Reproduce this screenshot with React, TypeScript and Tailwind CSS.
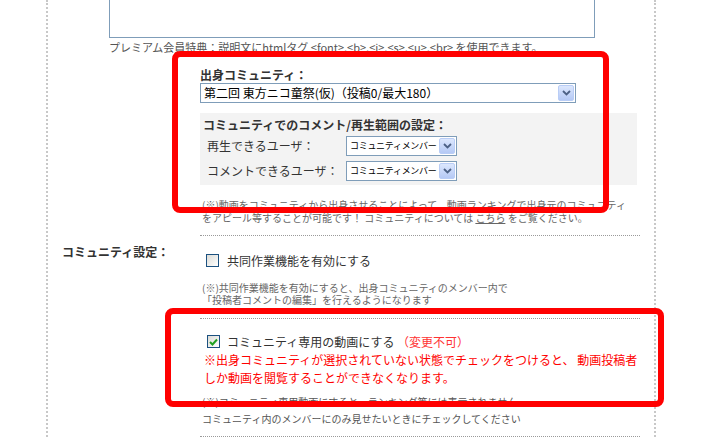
import React from "react";

const font = { fontFamily: '"Noto Sans CJK JP", "Noto Sans", sans-serif' };

function DropButton() {
  return (
    <div className="flex h-[16px] w-[16px] shrink-0 items-center justify-center rounded-[2px] border border-[#b9cdf6] bg-gradient-to-b from-[#dce7fd] to-[#b5c9f5]">
      <svg width="9" height="6" viewBox="0 0 9 6">
        <path d="M1 1 L4.5 4.5 L8 1" fill="none" stroke="#4d6185" strokeWidth="1.8" />
      </svg>
    </div>
  );
}

function Select({ value, className, textClass }: { value: string; className: string; textClass: string }) {
  return (
    <div className={`flex items-center justify-between border border-[#7f9db9] bg-white pl-[3px] pr-[1px] ${className}`}>
      <span className={`whitespace-nowrap text-[#000] ${textClass}`}>{value}</span>
      <DropButton />
    </div>
  );
}

function Checkbox({ checked }: { checked?: boolean }) {
  return (
    <div className="flex h-[13px] w-[13px] shrink-0 items-center justify-center border border-[#1c5180] bg-gradient-to-br from-[#dcdcd7] to-[#ffffff]">
      {checked && (
        <svg width="9" height="8" viewBox="0 0 9 8">
          <path d="M1 4 L3.5 6.5 L8 1.5" fill="none" stroke="#21a121" strokeWidth="2" />
        </svg>
      )}
    </div>
  );
}

function Dotted() {
  return <div className="w-[440px] border-t border-dotted border-[#9a9a9a]" />;
}

export default function App() {
  return (
    <div className="relative h-[437px] w-[716px] overflow-hidden bg-white text-[#333]" style={font}>
      <div className="ml-[46px] h-[437px] w-[610px] border-x-2 border-dotted border-[#c8c8c8]">
        {/* description row */}
        <div className="pl-[61px]">
          <div className="h-[38px] w-[486px] border border-t-0 border-[#7f9db9]" />
          <p className="mt-[3px] text-[11px] leading-[13px] text-[#555]">
            プレミアム会員特典：説明文にhtmlタグ &lt;font&gt;,&lt;b&gt;,&lt;i&gt;,&lt;s&gt;,&lt;u&gt;,&lt;br&gt; を使用できます。
          </p>
        </div>

        {/* community row */}
        <div className="flex">
          <div className="w-[152px] shrink-0" />
          <div className="w-[440px]">
            <p className="mt-[13px] text-[12px] font-bold leading-[15px] text-[#333]">出身コミュニティ：</p>
            <Select
              value="第二回  東方ニコ童祭(仮)（投稿0/最大180）"
              className="mt-[1px] h-[20px] w-[376px]"
              textClass="text-[12px] leading-[18px]"
            />
            <div className="mt-[10px] h-[72px] w-[437px] bg-[#f3f3f3] px-[3px] pt-[4px]">
              <p className="text-[12px] font-bold leading-[15px] text-[#333]">コミュニティでのコメント/再生範囲の設定：</p>
              <div className="mt-[4px] flex items-center">
                <span className="w-[143px] pl-[4px] text-[12px] leading-[20px] text-[#333]">再生できるユーザ：</span>
                <Select value="コミュニティメンバー" className="h-[20px] w-[111px]" textClass="text-[9px] tracking-[-0.3px] leading-[18px]" />
              </div>
              <div className="mt-[5px] flex items-center">
                <span className="w-[143px] pl-[4px] text-[12px] leading-[20px] text-[#333]">コメントできるユーザ：</span>
                <Select value="コミュニティメンバー" className="h-[20px] w-[111px]" textClass="text-[9px] tracking-[-0.3px] leading-[18px]" />
              </div>
            </div>
            <p className="mt-[13px] pl-[2px] text-[10px] leading-[13px] text-[#666]">
              (※)動画をコミュニティから出身させることによって、動画ランキングで出身元のコミュニティ
              <br />
              をアピール等することが可能です！ コミュニティについては <span className="underline">こちら</span> をご覧ください。
            </p>
            <div className="mt-[11px]">
              <Dotted />
            </div>
          </div>
        </div>

        {/* community settings row */}
        <div className="flex">
          <div className="w-[152px] shrink-0 pl-[14px] pt-[2px]">
            <span className="text-[12px] font-bold leading-[15px] text-[#333]">コミュニティ設定：</span>
          </div>
          <div className="w-[440px]">
            <div className="mt-[17px] flex items-center gap-[8px] pl-[6px]">
              <Checkbox />
              <span className="text-[12px] leading-[15px] text-[#333]">共同作業機能を有効にする</span>
            </div>
            <p className="mt-[14px] pl-[2px] text-[10px] leading-[12px] text-[#666]">
              (※)共同作業機能を有効にすると、出身コミュニティのメンバー内で
              <br />
              「投稿者コメントの編集」を行えるようになります
            </p>
            <div className="mt-[12px]">
              <Dotted />
            </div>
            <div className="mt-[15px] flex items-center gap-[7px] pl-[7px]">
              <Checkbox checked />
              <span className="text-[12px] leading-[15px] text-[#333]">
                コミュニティ専用の動画にする <span className="text-[#ff3333]">（変更不可）</span>
              </span>
            </div>
            <p className="mt-[2px] pl-[4px] text-[12px] leading-[18px] text-[#ff0000]">
              ※出身コミュニティが選択されていない状態でチェックをつけると、 動画投稿者
              <br />
              しか動画を閲覧することができなくなります。
            </p>
            <p className="mt-[6px] pl-[2px] text-[10px] leading-[17px] text-[#555]">
              (※)コミュニティ専用動画にすると、ランキング等には表示されません
              <br />
              コミュニティ内のメンバーにのみ見せたいときにチェックしてください
            </p>
            <div className="mt-[9px]">
              <Dotted />
            </div>
          </div>
        </div>
      </div>

      {/* red annotation frames */}
      <div className="absolute left-[172px] top-[51px] h-[162px] w-[437px] rounded-[8px] border-[6px] border-[#ff0000]" />
      <div className="absolute left-[165px] top-[308px] h-[99px] w-[499px] rounded-[8px] border-[6px] border-[#ff0000]" />
    </div>
  );
}
